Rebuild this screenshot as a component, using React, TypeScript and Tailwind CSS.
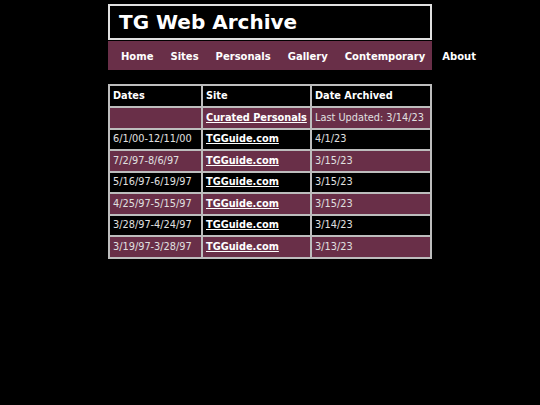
import React from "react";

const rows = [
  ["6/1/00-12/11/00", "TGGuide.com", "4/1/23"],
  ["7/2/97-8/6/97", "TGGuide.com", "3/15/23"],
  ["5/16/97-6/19/97", "TGGuide.com", "3/15/23"],
  ["4/25/97-5/15/97", "TGGuide.com", "3/15/23"],
  ["3/28/97-4/24/97", "TGGuide.com", "3/14/23"],
  ["3/19/97-3/28/97", "TGGuide.com", "3/13/23"],
];

export default function App() {
  const maroon = "bg-[#692f48]";
  const cell = "border border-[#bdbdbd] px-[3px] pt-[1px] whitespace-nowrap";
  return (
    <div className="min-h-[405px] w-[540px] bg-black pt-[4px] font-['DejaVu_Sans',Verdana,sans-serif] text-[#e0e0e0]">
      <div className="mx-auto w-[324px]">
        <div className="flex h-[36px] items-center border-2 border-[#e0e0e0] bg-black pl-[9px]">
          <span className="text-[20px] font-bold leading-none text-white">TG Web Archive</span>
        </div>
        <div className={`mt-[1px] flex h-[29px] items-center gap-[17px] whitespace-nowrap pl-[13px] pt-[1px] text-[10px] font-bold text-white ${maroon}`}>
          <span>Home</span>
          <span>Sites</span>
          <span>Personals</span>
          <span>Gallery</span>
          <span>Contemporary</span>
          <span>About</span>
        </div>
        <table className="mt-[14px] w-[324px] table-fixed border-separate border-spacing-0 border border-[#bdbdbd] text-[9.75px]">
          <thead>
            <tr className="h-[22px] bg-black">
              <th className={`w-[93px] text-left font-bold text-white ${cell}`}>Dates</th>
              <th className={`w-[109px] text-left font-bold text-white ${cell}`}>Site</th>
              <th className={`text-left font-bold text-white ${cell}`}>Date Archived</th>
            </tr>
          </thead>
          <tbody>
            <tr className={`h-[21.5px] ${maroon}`}>
              <td className={cell}></td>
              <td className={`font-bold text-white underline ${cell}`}>Curated Personals</td>
              <td className={cell}>Last Updated: 3/14/23</td>
            </tr>
            {rows.map((r, i) => (
              <tr key={i} className={`h-[21.5px] ${i % 2 === 0 ? "bg-black" : maroon}`}>
                <td className={cell}>{r[0]}</td>
                <td className={`font-bold text-white underline ${cell}`}>{r[1]}</td>
                <td className={cell}>{r[2]}</td>
              </tr>
            ))}
          </tbody>
        </table>
      </div>
    </div>
  );
}
